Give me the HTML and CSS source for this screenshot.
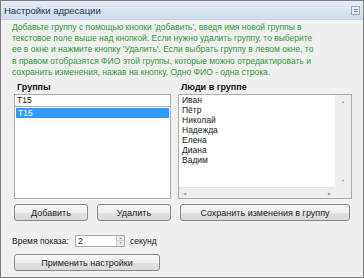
FILE: index.html
```html
<!DOCTYPE html>
<html>
<head>
    <title>Настройки адресации</title>
    <link rel="stylesheet" href="styles.css">
</head>
<body>
    <div class="window">
        <div class="titlebar">
            <span class="title">Настройки адресации</span>
            <span class="sys-btn"><span class="sys-line"></span></span>
        </div>

        <p class="hint">
            Добавьте группу с помощью кнопки 'добавить', введя имя новой группы в<br>
            текстовое поле выше над кнопкой. Если нужно удалить группу, то выберите<br>
            ее в окне и нажмите кнопку 'Удалить'. Если выбрать группу в левом окне, то<br>
            в правом отобразятся ФИО этой группы, которые можно отредактировать и<br>
            сохранить изменения, нажав на кнопку. Одно ФИО - одна строка.
        </p>

        <div class="panels">
            <div class="panel">
                <div class="panel-label">Группы</div>
                <div class="name-input">T15</div>
                <ul class="listbox">
                    <li class="selected">T15</li>
                </ul>
            </div>
            <div class="panel">
                <div class="panel-label">Люди в группе</div>
                <div class="memo">
                    <div class="memo-text">
                        Иван<br>Пётр<br>Николай<br>Надежда<br>Елена<br>Диана<br>Вадим
                    </div>
                    <div class="vscroll">
                        <span class="arrow">&#9650;</span>
                        <span class="arrow">&#9660;</span>
                    </div>
                    <div class="hscroll">
                        <span class="arrow">&#9664;</span>
                        <span class="arrow">&#9654;</span>
                    </div>
                    <div class="corner"></div>
                </div>
            </div>
        </div>

        <div class="actions">
            <button class="btn btn-small">Добавить</button>
            <button class="btn btn-small">Удалить</button>
            <button class="btn btn-save">Сохранить изменения в группу</button>
        </div>

        <div class="time-row">
            <span class="time-label">Время показа:</span>
            <div class="spin">
                <span class="spin-value">2</span>
                <span class="spin-btns">
                    <span class="spin-up">&#9650;</span>
                    <span class="spin-down">&#9660;</span>
                </span>
            </div>
            <span class="time-unit">секунд</span>
        </div>

        <button class="btn btn-apply">Применить настройки</button>
    </div>
</body>
</html>
```

FILE: styles.css
```css
body {
    margin: 0;
    padding: 0;
    background-color: #f0f0f0;
    font-family: "Liberation Sans", Arial, sans-serif;
}

.window {
    box-sizing: border-box;
    width: 364px;
    height: 278px;
    border: 1px solid #7c7c7c;
    background-color: #f0f0f0;
    color: #1a1a1a;
    font-size: 8.5px;
}

.titlebar {
    height: 18px;
    display: flex;
    align-items: center;
    justify-content: space-between;
    padding: 0 3px 0 3px;
    background: linear-gradient(#e6eef8, #cfdcec);
    border-bottom: 1px solid #c6d3e3;
}

.title {
    font-size: 9.5px;
    color: #1e3450;
}

.sys-btn {
    box-sizing: border-box;
    width: 9px;
    height: 9px;
    border: 1px solid #9aa6b6;
    background: #e6ecf4;
    display: flex;
    align-items: center;
    justify-content: center;
}

.sys-line {
    width: 4px;
    height: 3px;
    border-top: 1px solid #7d8794;
    border-bottom: 1px solid #7d8794;
    box-sizing: border-box;
}

.hint {
    margin: 2px 0 0 11px;
    color: #33983a;
    font-size: 8.5px;
    line-height: 11.2px;
}

.panels {
    display: grid;
    grid-template-columns: 157px 174px;
    column-gap: 7px;
    margin: 3px 0 0 13px;
}

.panel {
    display: flex;
    flex-direction: column;
}

.panel-label {
    height: 12px;
    margin-bottom: 1px;
    padding-left: 3px;
    font-weight: bold;
    font-size: 9px;
    line-height: 12px;
    color: #111;
}

.name-input {
    box-sizing: border-box;
    height: 13px;
    padding-left: 2px;
    border: 1px solid #abadb3;
    background: #fff;
    font-size: 8.5px;
    line-height: 11px;
}

.listbox {
    box-sizing: border-box;
    height: 92px;
    margin: 0;
    padding: 1px 1px 0 1px;
    list-style: none;
    border: 1px solid #abadb3;
    border-top: none;
    background: #fff;
}

.listbox li {
    height: 10px;
    padding-left: 2px;
    line-height: 10px;
    font-size: 8.5px;
}

.listbox .selected {
    background-color: #3399ff;
    color: #fff;
}

.memo {
    box-sizing: border-box;
    height: 105px;
    display: grid;
    grid-template-columns: 1fr 16px;
    grid-template-rows: 1fr 11px;
    border: 1px solid #abadb3;
    background: #fff;
}

.memo-text {
    padding: 0 0 0 3px;
    font-size: 8.5px;
    line-height: 10px;
}

.vscroll,
.hscroll {
    display: flex;
    justify-content: space-between;
    align-items: center;
    background: #ededed;
    color: #a0a0a0;
    font-size: 4px;
}

.vscroll {
    flex-direction: column;
    padding: 4px 0;
}

.hscroll {
    padding: 0 4px;
    border-top: 1px solid #e2e2e2;
}

.corner {
    background: #ededed;
}

.actions {
    display: flex;
    gap: 9px;
    margin: 5px 0 0 13px;
}

.btn {
    box-sizing: border-box;
    height: 17px;
    padding: 0;
    border: 1px solid #8a8a8a;
    border-radius: 3px;
    background: linear-gradient(#f6f6f6 0%, #eeeeee 50%, #e2e2e2 51%, #d8d8d8 100%);
    font-family: "Liberation Sans", Arial, sans-serif;
    font-size: 9px;
    color: #222;
    cursor: pointer;
}

.btn-small {
    width: 74px;
}

.btn-save {
    width: 170px;
}

.time-row {
    display: flex;
    align-items: center;
    height: 13px;
    margin: 13px 0 0 11px;
}

.time-label {
    width: 63px;
    font-size: 8.5px;
}

.spin {
    box-sizing: border-box;
    width: 50px;
    height: 12px;
    display: flex;
    justify-content: space-between;
    border: 1px solid #abadb3;
    background: #fff;
}

.spin-value {
    padding-left: 2px;
    font-size: 8.5px;
    line-height: 10px;
}

.spin-btns {
    width: 7px;
    display: flex;
    flex-direction: column;
    background: #e4ebf3;
    border-left: 1px solid #c8d0da;
    color: #6d7c8e;
    font-size: 3px;
    text-align: center;
}

.spin-up,
.spin-down {
    flex: 1;
    display: flex;
    align-items: center;
    justify-content: center;
}

.spin-up {
    border-bottom: 1px solid #c8d0da;
}

.time-unit {
    margin-left: 5px;
    font-size: 8.5px;
}

.btn-apply {
    display: block;
    width: 146px;
    margin: 7px 0 0 13px;
}
```
